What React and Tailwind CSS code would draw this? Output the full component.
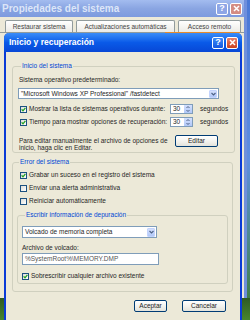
import React from 'react';

const FONT = { fontFamily: '"Liberation Sans", Arial, sans-serif' };

function Check({ checked, className = '' }) {
    return (
        <span className={`w-[7px] h-[7px] shrink-0 border border-[#1c5180] bg-gradient-to-br from-[#dcdcd7] to-white flex items-center justify-center ${className}`}>
            {checked && (
                <svg width="5" height="5" viewBox="0 0 5 5">
                    <path d="M0.6 2.4 L2 3.8 L4.4 0.9" fill="none" stroke="#21a121" strokeWidth="1.3" />
                </svg>
            )}
        </span>
    );
}

function CheckRow({ checked, label, className = '' }) {
    return (
        <div className={`h-[10px] flex items-center gap-[2px] ${className}`}>
            <Check checked={checked} />
            <span className="whitespace-nowrap">{label}</span>
        </div>
    );
}

function DropArrow({ className = '' }) {
    return (
        <span className={`bg-gradient-to-b from-[#d4e0fd] to-[#b1c8f8] border border-[#c3d3fd] rounded-[1px] flex items-center justify-center ${className}`}>
            <svg width="5" height="4" viewBox="0 0 5 4">
                <path d="M0.5 1 L2.5 3 L4.5 1" fill="none" stroke="#4d6185" strokeWidth="1.1" />
            </svg>
        </span>
    );
}

function Spin({ value }) {
    return (
        <div className="w-[23px] h-[10px] bg-white border border-[#7f9db9] flex items-center">
            <span className="flex-1 pl-[2px] leading-none">{value}</span>
            <span className="w-[8px] h-full flex flex-col bg-gradient-to-b from-[#d4e0fd] to-[#b1c8f8]">
                <svg className="flex-1" width="8" height="4" viewBox="0 0 8 4">
                    <path d="M2.5 3 L4 1.5 L5.5 3" fill="none" stroke="#4d6185" strokeWidth="1" />
                </svg>
                <svg className="flex-1" width="8" height="4" viewBox="0 0 8 4">
                    <path d="M2.5 1 L4 2.5 L5.5 1" fill="none" stroke="#4d6185" strokeWidth="1" />
                </svg>
            </span>
        </div>
    );
}

function XpButton({ children, className = '' }) {
    return (
        <div className={`h-[12px] rounded-[2px] border border-[#003c74] bg-gradient-to-b from-white via-[#f3f3ef] to-[#e3e3db] flex items-center justify-center text-[6.5px] text-[#222] ${className}`}>
            {children}
        </div>
    );
}

function TitleButtons({ inactive }) {
    return (
        <div className="flex gap-[2px]">
            <span className={`w-[12px] h-[12px] rounded-[2px] border border-white flex items-center justify-center text-white font-bold text-[9px] leading-none ${inactive ? 'bg-[#8ea6e6] border-[#dfe7fa]' : 'bg-gradient-to-b from-[#3d8af7] to-[#1656e0]'}`}>
                ?
            </span>
            <span className={`w-[12px] h-[12px] rounded-[2px] border border-white flex items-center justify-center ${inactive ? 'bg-[#d48c82] border-[#f3dcd8]' : 'bg-gradient-to-b from-[#e8806a] to-[#c8401e]'}`}>
                <svg width="7" height="7" viewBox="0 0 7 7">
                    <path d="M1 1 L6 6 M6 1 L1 6" stroke="white" strokeWidth="1.5" />
                </svg>
            </span>
        </div>
    );
}

function Tab({ label, className = '' }) {
    return (
        <div className={`h-[12px] border border-b-0 border-[#919b9c] rounded-t-[2px] bg-gradient-to-b from-white to-[#ecebe6] flex items-center justify-center text-[6.5px] text-[#444] ${className}`}>
            {label}
        </div>
    );
}

export default function App() {
    return (
        <div className="relative w-[250px] h-[320px] overflow-hidden bg-gradient-to-b from-[#4a78d6] via-[#5f8ee0] to-[#3f7a2a]" style={FONT}>
            {/* desktop grass */}
            <div className="absolute left-0 right-0 bottom-0 h-[22px] bg-gradient-to-b from-[#2f5a22] to-[#48862e]" />

            {/* background window */}
            <div className="absolute left-[-4px] top-0 w-[251px] h-[298px] bg-[#ece9d8] border-r-[3px] border-[#6f8fdc] flex flex-col">
                <div className="h-[17px] bg-gradient-to-b from-[#a3bcef] via-[#8aa5e2] to-[#7d9ade] flex items-center justify-between pl-[6px] pr-[2px]">
                    <span className="text-[10px] font-bold text-[#dde6f8]">Propiedades del sistema</span>
                    <TitleButtons inactive />
                </div>
                <div className="flex items-end gap-[3px] pl-[9px] pt-[3px] border-b border-[#919b9c] relative">
                    <Tab label="Restaurar sistema" className="w-[68px]" />
                    <Tab label="Actualizaciones automáticas" className="w-[99px]" />
                    <Tab label="Acceso remoto" className="w-[63px]" />
                    <span className="absolute left-[169px] w-[75px] bottom-[-1px] h-[1px] bg-[#e68b2c]" />
                </div>
            </div>

            {/* dialog */}
            <div className="absolute left-[4px] top-[33px] w-[238px] h-[300px] rounded-t-[5px] bg-[#ece9d8] border-x-2 border-[#0a3ad6] flex flex-col text-[6.5px] text-[#262626]">
                <div className="h-[19px] -mx-[2px] rounded-t-[5px] bg-gradient-to-b from-[#3a8cf8] via-[#0a5ae8] to-[#0847d6] flex items-center justify-between pl-[5px] pr-[4px]">
                    <span className="text-[8.5px] font-bold text-white">Inicio y recuperación</span>
                    <TitleButtons />
                </div>

                <div className="flex flex-col pt-[10px] pl-[6px] pr-[7px]">
                    <fieldset className="border border-[#d0d0bf] rounded-[3px] px-[6px] pb-[1px]">
                        <legend className="ml-[2px] px-[1px] h-[8px] leading-[8px] text-[#0046d5]">Inicio del sistema</legend>
                        <div className="mt-[6px] h-[8px] leading-[8px]">Sistema operativo predeterminado:</div>
                        <div className="mt-[4px] -ml-[1px] w-[201px] h-[11px] bg-white border border-[#7f9db9] flex items-center pl-[2px] pr-[1px]">
                            <span className="flex-1">"Microsoft Windows XP Professional" /fastdetect</span>
                            <DropArrow className="w-[8px] h-[8px]" />
                        </div>
                        <div className="mt-[5px] h-[10px] flex items-center ml-[1px]">
                            <Check checked />
                            <span className="ml-[2px] w-[141px] whitespace-nowrap">Mostrar la lista de sistemas operativos durante:</span>
                            <Spin value="30" />
                            <span className="ml-[7px]">segundos</span>
                        </div>
                        <div className="mt-[3px] h-[10px] flex items-center ml-[1px]">
                            <Check checked />
                            <span className="ml-[2px] w-[141px] whitespace-nowrap">Tiempo para mostrar opciones de recuperación:</span>
                            <Spin value="30" />
                            <span className="ml-[7px]">segundos</span>
                        </div>
                        <div className="mt-[8px] h-[16px] flex">
                            <div className="w-[156px] pt-[2px] leading-[7px]">
                                Para editar manualmente el archivo de opciones de<br />inicio, haga clic en Editar.
                            </div>
                            <XpButton className="w-[43px]">Editar</XpButton>
                        </div>
                    </fieldset>

                    <fieldset className="mt-[5px] border border-[#d0d0bf] rounded-[3px] px-[4px] pb-[7px]">
                        <legend className="ml-[2px] px-[1px] h-[8px] leading-[8px] text-[#0046d5]">Error del sistema</legend>
                        <CheckRow checked label="Grabar un suceso en el registro del sistema" className="mt-[4px] ml-[3px]" />
                        <CheckRow label="Enviar una alerta administrativa" className="mt-[3px] ml-[3px]" />
                        <CheckRow label="Reiniciar automáticamente" className="mt-[3px] ml-[3px]" />

                        <fieldset className="mt-[5px] border border-[#d0d0bf] rounded-[3px] px-[4px] pb-[2px]">
                            <legend className="ml-[3px] px-[1px] h-[8px] leading-[8px] text-[#0046d5]">Escribir información de depuración</legend>
                            <div className="mt-[7px] w-[135px] h-[12px] bg-white border border-[#7f9db9] flex items-center pl-[2px] pr-[1px]">
                                <span className="flex-1">Volcado de memoria completa</span>
                                <DropArrow className="w-[8px] h-[9px]" />
                            </div>
                            <div className="mt-[6px] h-[8px] leading-[8px]">Archivo de volcado:</div>
                            <div className="mt-[1px] w-[137px] h-[12px] bg-white border border-[#7f9db9] flex items-center pl-[2px] text-[#555]">
                                %SystemRoot%\MEMORY.DMP
                            </div>
                            <CheckRow checked label="Sobrescribir cualquier archivo existente" className="mt-[6px]" />
                        </fieldset>
                    </fieldset>

                    <div className="mt-[8px] flex justify-end gap-[15px] pr-[7px]">
                        <XpButton className="w-[33px]">Aceptar</XpButton>
                        <XpButton className="w-[44px]">Cancelar</XpButton>
                    </div>
                </div>
            </div>
        </div>
    );
}
